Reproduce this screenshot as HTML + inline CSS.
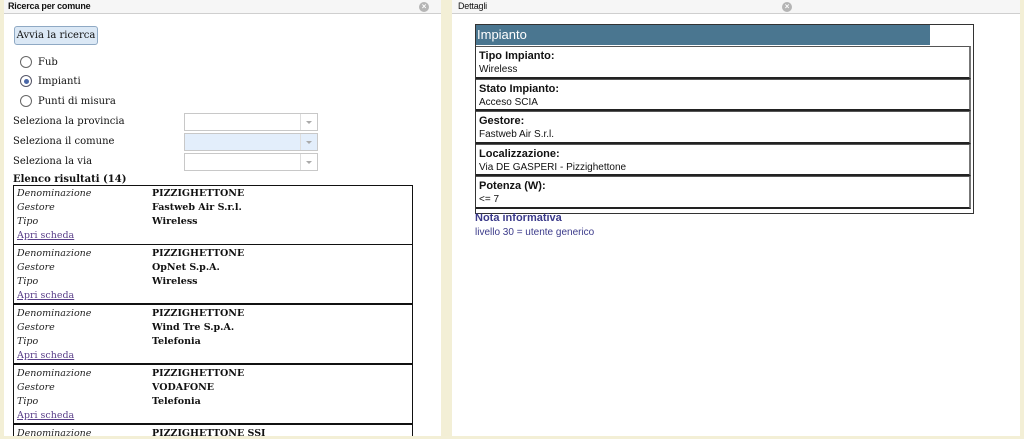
<!DOCTYPE html>
<html style="width:1024px;height:439px;overflow:hidden"><head><meta charset="utf-8"><style>
*{margin:0;padding:0;box-sizing:border-box}
body{width:1024px;height:439px;overflow:hidden;background:#f3efd6;position:relative;font-family:"DejaVu Serif","Liberation Serif",serif;font-size:10px;color:#111}
.p{position:absolute;background:#fff}
.hd{position:absolute;left:0;right:0;top:0;height:14px;background:#f6f6f6;border-bottom:1px solid #cfcfcf;font-family:"Liberation Sans",sans-serif;font-size:9px;font-weight:bold;line-height:13px;padding-left:4px;letter-spacing:-0.2px}
.x{position:absolute;top:2px;width:10px;height:10px;border-radius:50%;background:#b5b5b5;color:#fff;font-size:8px;line-height:10px;text-align:center;font-weight:bold}
.a{position:absolute}
.btn{left:14px;top:26px;width:84px;height:19px;border:1px solid #8fa9c4;border-radius:3px;background:#dbe8f5;font-size:10px;line-height:17px;text-align:center}
.rad{width:12px;height:12px;border:1.5px solid #666;border-radius:50%;left:20px}
.sel{left:184px;width:134px;height:18px;border:1px solid #c8c8c8;background:#fff}
.sel:after{content:"";position:absolute;right:0;top:0;width:16px;height:16px;border-left:1px solid #ddd}
.sel i{position:absolute;right:5px;top:7px;border:3px solid transparent;border-top:3px solid #aaa;z-index:1}
.it{position:absolute;left:13px;width:400px;height:60px;border:1.5px solid #111;border-top-width:1px;overflow:hidden}
.it div{position:absolute;font-size:9.5px}
.lb{left:3px;font-style:italic;color:#222}
.vl{left:138px;font-weight:bold}
.lk{left:3px;color:#5a3f8a;text-decoration:underline}
.s{font-family:"Liberation Sans","DejaVu Sans",sans-serif}
.row{position:absolute;left:476px;width:495px;border:1px solid #555;border-left:none;border-bottom:2px solid #222;border-right:2px solid #777;padding-left:3px}
.row b{display:block;font-size:11px;margin-top:3px}
.row span{display:block;font-size:10px;margin-top:2px}
</style></head><body>
<div class="p" style="left:4px;top:0;width:437px;height:436px">
<div class="hd">Ricerca per comune<div class="x" style="left:415px">×</div></div>
</div>
<div class="a btn">Avvia la ricerca</div>
<div class="a rad" style="top:56px"></div><div class="a" style="left:38px;top:57px">Fub</div>
<div class="a rad" style="top:75px;border-color:#556"></div><div class="a" style="left:23.5px;top:78.5px;width:5px;height:5px;border-radius:50%;background:#4a67a8"></div><div class="a" style="left:38px;top:76px">Impianti</div>
<div class="a rad" style="top:95px"></div><div class="a" style="left:38px;top:96px">Punti di misura</div>
<div class="a" style="left:13px;top:116px">Seleziona la provincia</div>
<div class="a" style="left:13px;top:136px">Seleziona il comune</div>
<div class="a" style="left:13px;top:156px">Seleziona la via</div>
<div class="a sel" style="top:113px"><i></i></div>
<div class="a sel" style="top:133px;background:#e3eefb"><i></i></div>
<div class="a sel" style="top:153px"><i></i></div>
<div class="a" style="left:13px;top:174px;font-weight:bold">Elenco risultati (14)</div>

<div class="it" style="top:185px"><div class="lb" style="top:2px">Denominazione</div><div class="vl" style="top:2px">PIZZIGHETTONE</div><div class="lb" style="top:16px">Gestore</div><div class="vl" style="top:16px">Fastweb Air S.r.l.</div><div class="lb" style="top:30px">Tipo</div><div class="vl" style="top:30px">Wireless</div><div class="lk" style="top:44px">Apri scheda</div></div>
<div class="it" style="top:244px"><div class="lb" style="top:3px">Denominazione</div><div class="vl" style="top:3px">PIZZIGHETTONE</div><div class="lb" style="top:17px">Gestore</div><div class="vl" style="top:17px">OpNet S.p.A.</div><div class="lb" style="top:31px">Tipo</div><div class="vl" style="top:31px">Wireless</div><div class="lk" style="top:45px">Apri scheda</div></div>
<div class="it" style="top:304px"><div class="lb" style="top:3px">Denominazione</div><div class="vl" style="top:3px">PIZZIGHETTONE</div><div class="lb" style="top:17px">Gestore</div><div class="vl" style="top:17px">Wind Tre S.p.A.</div><div class="lb" style="top:31px">Tipo</div><div class="vl" style="top:31px">Telefonia</div><div class="lk" style="top:45px">Apri scheda</div></div>
<div class="it" style="top:364px"><div class="lb" style="top:3px">Denominazione</div><div class="vl" style="top:3px">PIZZIGHETTONE</div><div class="lb" style="top:17px">Gestore</div><div class="vl" style="top:17px">VODAFONE</div><div class="lb" style="top:31px">Tipo</div><div class="vl" style="top:31px">Telefonia</div><div class="lk" style="top:45px">Apri scheda</div></div>
<div class="it" style="top:424px;height:12px;border-bottom:none"><div class="lb" style="top:3px">Denominazione</div><div class="vl" style="top:3px">PIZZIGHETTONE SSI</div></div>

<div class="p" style="left:452px;top:0;width:568px;height:436px">
<div class="hd" style="font-weight:normal;font-size:9px;padding-left:6px">Dettagli<div class="x" style="left:330px">×</div></div>
</div>
<div class="a" style="left:475px;top:24px;width:499px;height:190px;border:1.5px solid #333"></div>
<div class="a s" style="left:476px;top:25px;width:454px;height:20px;background:#4a7690;color:#fff;font-size:13px;line-height:19px;padding-left:1px">Impianto</div>
<div class="row s" style="top:46px;height:33px"><b>Tipo Impianto:</b><span>Wireless</span></div>
<div class="row s" style="top:79px;height:32px"><b>Stato Impianto:</b><span>Acceso SCIA</span></div>
<div class="row s" style="top:111px;height:33px"><b>Gestore:</b><span>Fastweb Air S.r.l.</span></div>
<div class="row s" style="top:144px;height:32px"><b>Localizzazione:</b><span>Via DE GASPERI - Pizzighettone</span></div>
<div class="row s" style="top:176px;height:33px"><b>Potenza (W):</b><span>&lt;= 7</span></div>
<div class="a s" style="left:475px;top:212px;color:#3b3a8a;font-weight:bold;font-size:11px">Nota informativa</div>
<div class="a s" style="left:475px;top:227px;color:#3b3a8a;font-size:10px">livello 30 = utente generico</div>
</body></html>
